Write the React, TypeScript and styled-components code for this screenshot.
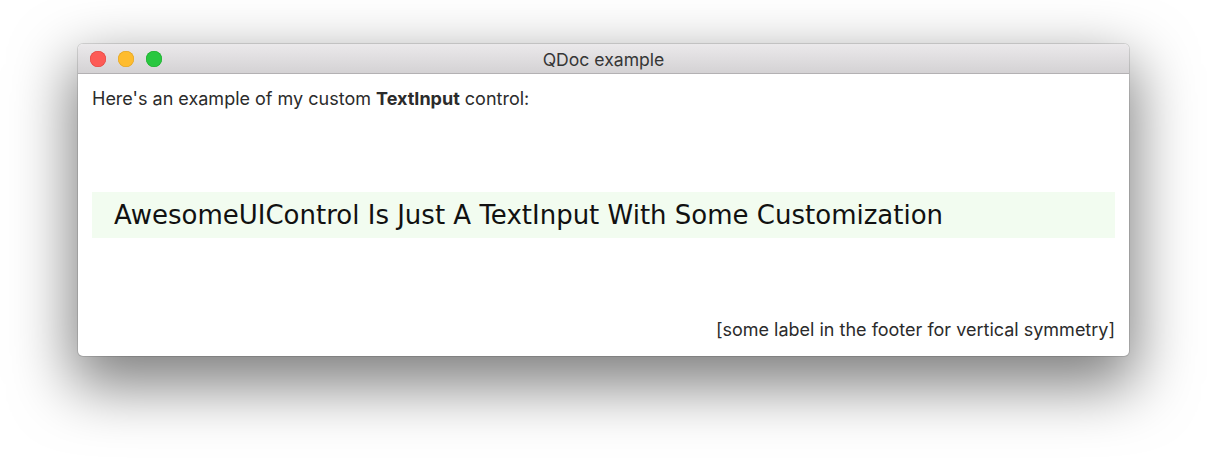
import React from "react";
import styled, { createGlobalStyle } from "styled-components";

const Global = createGlobalStyle`
  html, body { margin: 0; padding: 0; background: #ffffff; }
  body { width: 1207px; height: 468px; overflow: hidden; }
`;

const Stage = styled.div`
  display: flex;
  justify-content: center;
  padding-top: 44px;
`;

const Window = styled.div`
  width: 1051px;
  height: 312px;
  display: flex;
  flex-direction: column;
  border-radius: 5px;
  background: #ffffff;
  box-shadow: 0 0 0 1px rgba(0, 0, 0, 0.12), 0 24px 60px 6px rgba(0, 0, 0, 0.5);
  overflow: hidden;
`;

const TitleBar = styled.div`
  position: relative;
  height: 30px;
  flex: none;
  display: flex;
  align-items: center;
  justify-content: center;
  padding-top: 1px;
  box-sizing: border-box;
  background: linear-gradient(#ebe9eb, #d4d2d4);
  border-bottom: 1px solid #b3b1b3;
  font-family: Inter, "Open Sans", sans-serif;
  font-size: 17.6px;
  color: #363636;
`;

const Lights = styled.div`
  position: absolute;
  left: 12px;
  top: 7px;
  display: flex;
  gap: 12px;
`;

const Light = styled.span<{ $fill: string; $edge: string }>`
  width: 16px;
  height: 16px;
  border-radius: 50%;
  background: ${(p) => p.$fill};
  box-shadow: inset 0 0 0 0.5px ${(p) => p.$edge};
`;

const Content = styled.div`
  flex: 1;
  display: flex;
  flex-direction: column;
  justify-content: space-between;
  padding: 13px 14px 14px 14px;
  font-family: Inter, "Open Sans", sans-serif;
  font-size: 18px;
  color: #2b2b2b;
`;

const Intro = styled.div`
  line-height: 24px;
`;

const Field = styled.div`
  height: 46px;
  display: flex;
  align-items: center;
  padding-left: 22px;
  background: #f2fcf0;
  font-family: "DejaVu Sans", Verdana, sans-serif;
  font-size: 26px;
  color: #111111;
`;

const Footer = styled.div`
  text-align: right;
  line-height: 24px;
`;

export default function App() {
  return (
    <>
      <Global />
      <Stage>
        <Window>
          <TitleBar>
            <Lights>
              <Light $fill="#fd5b56" $edge="#e0443e" />
              <Light $fill="#febc2e" $edge="#dea123" />
              <Light $fill="#29c740" $edge="#1aab29" />
            </Lights>
            QDoc example
          </TitleBar>
          <Content>
            <Intro>
              Here's an example of my custom <b>TextInput</b> control:
            </Intro>
            <Field>AwesomeUIControl Is Just A TextInput With Some Customization</Field>
            <Footer>[some label in the footer for vertical symmetry]</Footer>
          </Content>
        </Window>
      </Stage>
    </>
  );
}
